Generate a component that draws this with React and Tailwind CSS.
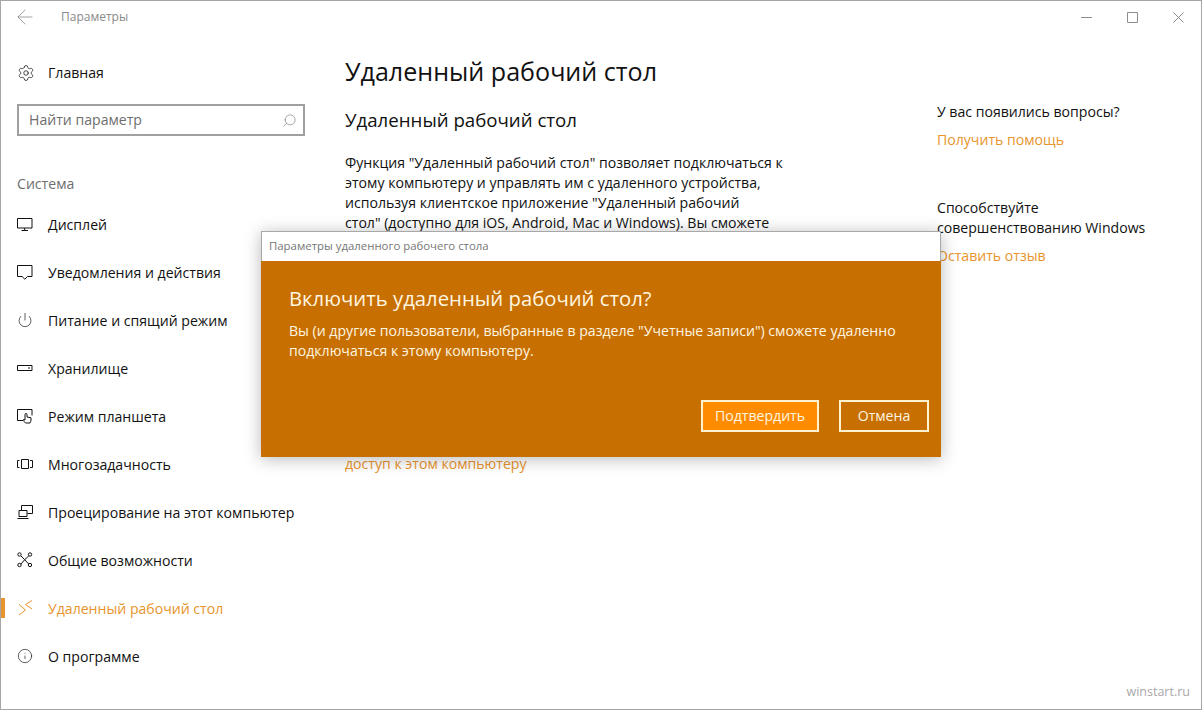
import { ArrowLeft, Settings, Power, Info, Search } from 'lucide-react';

const MonitorIcon = () => (
  <svg width="16" height="16" viewBox="0 0 16 16" fill="none" stroke="currentColor">
    <path d="M.5 2.500h14.500v9.500H.5zM7.700 12v2.500M4.500 14.500h6.500" />
  </svg>
);
const NotifyIcon = () => (
  <svg width="16" height="16" viewBox="0 0 16 16" fill="none" stroke="currentColor">
    <path d="M.5 1.500h14.500v11h-4.500l-2.700 2.700-2.700-2.700H.5z" />
  </svg>
);
const StorageIcon = () => (
  <svg width="16" height="16" viewBox="0 0 16 16" fill="none" stroke="currentColor">
    <path d="M.5 5.500h14.500v5H.5zM11 8h2" />
  </svg>
);
const TabletIcon = () => (
  <svg width="16" height="16" viewBox="0 0 16 16" fill="none" stroke="currentColor">
    <path d="M6 12.500H.5v-11h14.500v6M8.500 15c-1-1-2-2-2-3.500l1.500.5V6.500a1 1 0 0 1 2 0V9l4 .8V12c0 1-.5 2-1 3z" fill="#fff" />
  </svg>
);
const MultitaskIcon = () => (
  <svg width="16" height="16" viewBox="0 0 16 16" fill="none" stroke="currentColor">
    <path d="M4.500 3.500h7v9h-7zM2.500 4.500h-2v7h2M13 4.500h2.500v7H13" />
  </svg>
);
const ProjectIcon = () => (
  <svg width="16" height="16" viewBox="0 0 16 16" fill="none" stroke="currentColor">
    <path d="M4.500 6V1.500h11v8h-5M2 6.500h8v6H2zM.5 14.500h11" />
  </svg>
);
const AccessIcon = () => (
  <svg width="16" height="16" viewBox="0 0 16 16" fill="none" stroke="currentColor">
    <circle cx="2.500" cy="2.500" r="1.700" />
    <circle cx="13" cy="2.500" r="1.700" />
    <circle cx="2.500" cy="13" r="1.700" />
    <circle cx="13" cy="13" r="1.700" />
    <path d="M4 4l3.700 3.700L11.700 4M4 12l3.700-4.300 4 4.300" />
  </svg>
);
const RemoteIcon = () => (
  <svg width="16" height="16" viewBox="0 0 16 16" fill="none" stroke="currentColor">
    <path d="M2 4.500l6.500 5.500-6.500 5M15 .5L8.500 4.500 15 9" />
  </svg>
);

const navItems = [
  { label: 'Дисплей', icon: <MonitorIcon /> },
  { label: 'Уведомления и действия', icon: <NotifyIcon /> },
  { label: 'Питание и спящий режим', icon: <Power size={16} strokeWidth={1} /> },
  { label: 'Хранилище', icon: <StorageIcon /> },
  { label: 'Режим планшета', icon: <TabletIcon /> },
  { label: 'Многозадачность', icon: <MultitaskIcon /> },
  { label: 'Проецирование на этот компьютер', icon: <ProjectIcon /> },
  { label: 'Общие возможности', icon: <AccessIcon /> },
  { label: 'Удаленный рабочий стол', icon: <RemoteIcon />, active: true },
  { label: 'О программе', icon: <Info size={16} strokeWidth={1} /> },
];

const NavRow = ({ label, icon, active }) => (
  <div className={`relative flex h-12 items-center pl-4 ${active ? 'text-[#e8942c]' : 'text-[#111]'}`}>
    {active && <div className="absolute left-0 top-[14px] h-5 w-[4px] bg-[#e8942c]" />}
    <span className="flex w-[31px] shrink-0">{icon}</span>
    <span className="whitespace-nowrap">{label}</span>
  </div>
);

const Sidebar = () => (
  <aside className="flex w-[328px] shrink-0 flex-col">
    <div className="flex h-[32px] items-center pl-3 text-[#8a8a8a]">
      <ArrowLeft size={24} strokeWidth={0.8} />
      <span className="ml-6 text-xs">Параметры</span>
    </div>
    <div className="mt-[16px] flex h-[48px] items-center pl-4 text-[#111]">
      <span className="flex w-[31px] shrink-0"><Settings size={18} strokeWidth={1} /></span>
      <span>Главная</span>
    </div>
    <div className="ml-4 mt-[7px] flex h-[32px] w-[288px] items-center justify-between border-2 border-[#a0a0a0] pl-[10px] pr-[6px] text-[#6e6e6e]">
      <span>Найти параметр</span>
      <Search size={15} strokeWidth={1} className="-scale-x-100 text-[#777]" />
    </div>
    <div className="ml-4 mt-[37px] text-[#6e6e6e]">Система</div>
    <nav className="mt-[6px]">
      {navItems.map((item) => <NavRow key={item.label} {...item} />)}
    </nav>
  </aside>
);

const Main = () => (
  <main className="w-[608px] shrink-0 pl-4 pt-[48px] text-[#111]">
    <h1 className="text-[25.1px] leading-[44px]">Удаленный рабочий стол</h1>
    <h2 className="mt-[13px] text-[18.66px] leading-[28px]">Удаленный рабочий стол</h2>
    <p className="mt-[19px] w-[460px] leading-5">
      Функция "Удаленный рабочий стол" позволяет подключаться к<br />
      этому компьютеру и управлять им с удаленного устройства,<br />
      используя клиентское приложение "Удаленный рабочий<br />
      стол" (доступно для iOS, Android, Mac и Windows). Вы сможете
    </p>
    <a className="mt-[220px] block text-[#e8942c]">доступ к этом компьютеру</a>
  </main>
);

const RightColumn = () => (
  <section className="flex-1 pt-[101px] text-[#111]">
    <p className="leading-5">У вас появились вопросы?</p>
    <a className="mt-2 block leading-5 text-[#e8942c]">Получить помощь</a>
    <p className="mt-[48px] leading-5">Способствуйте<br />совершенствованию Windows</p>
    <a className="mt-2 block leading-5 text-[#e8942c]">Оставить отзыв</a>
  </section>
);

const Dialog = () => (
  <div className="absolute left-[260px] top-[230px] flex h-[226px] w-[680px] flex-col shadow-[0_2px_16px_rgba(0,0,0,0.28)]">
    <div className="flex h-[30px] shrink-0 items-center border border-b-0 border-[#a8a8a8] bg-white pb-[2px] pl-[7px] text-[11.4px] text-[#777]">
      Параметры удаленного рабочего стола
    </div>
    <div className="flex flex-1 flex-col bg-[#c76f00] pl-7 pr-3 text-[#fff6e0]">
      <h3 className="mt-[23px] text-[20.3px] leading-7">Включить удаленный рабочий стол?</h3>
      <p className="mt-[9px] leading-5">
        Вы (и другие пользователи, выбранные в разделе "Учетные записи") сможете удаленно<br />
        подключаться к этому компьютеру.
      </p>
      <div className="mt-auto mb-[25px] flex justify-end gap-5">
        <button className="h-[32px] w-[118px] border-2 border-[#fff3cf] bg-[#ff8c00]">Подтвердить</button>
        <button className="h-[32px] w-[90px] border-2 border-[#fff3cf]">Отмена</button>
      </div>
    </div>
  </div>
);

const WindowButtons = () => (
  <div className="absolute right-0 top-0 flex h-[32px] items-center text-[#8c8c8c]">
    <span className="flex w-[46px] justify-center">
      <svg width="11" height="11" viewBox="0 0 11 11" fill="none" stroke="currentColor"><path d="M0 5.500h11" /></svg>
    </span>
    <span className="flex w-[46px] justify-center">
      <svg width="11" height="11" viewBox="0 0 11 11" fill="none" stroke="currentColor"><path d="M.5.5h10v10H.5z" /></svg>
    </span>
    <span className="flex w-[46px] justify-center">
      <svg width="11" height="11" viewBox="0 0 11 11" fill="none" stroke="currentColor"><path d="M.5.5l10 10M10.500.5l-10 10" /></svg>
    </span>
  </div>
);

export default function App() {
  return (
    <div className="relative h-[710px] w-[1202px] overflow-hidden border border-[#a6a6a6] bg-white font-['Open_Sans',sans-serif] text-[14.1px]">
      <WindowButtons />
      <div className="flex h-full">
        <Sidebar />
        <Main />
        <RightColumn />
      </div>
      <Dialog />
      <div className="absolute bottom-[7px] right-[11px] text-[12.5px] text-[#a8a8a8]">winstart.ru</div>
    </div>
  );
}
